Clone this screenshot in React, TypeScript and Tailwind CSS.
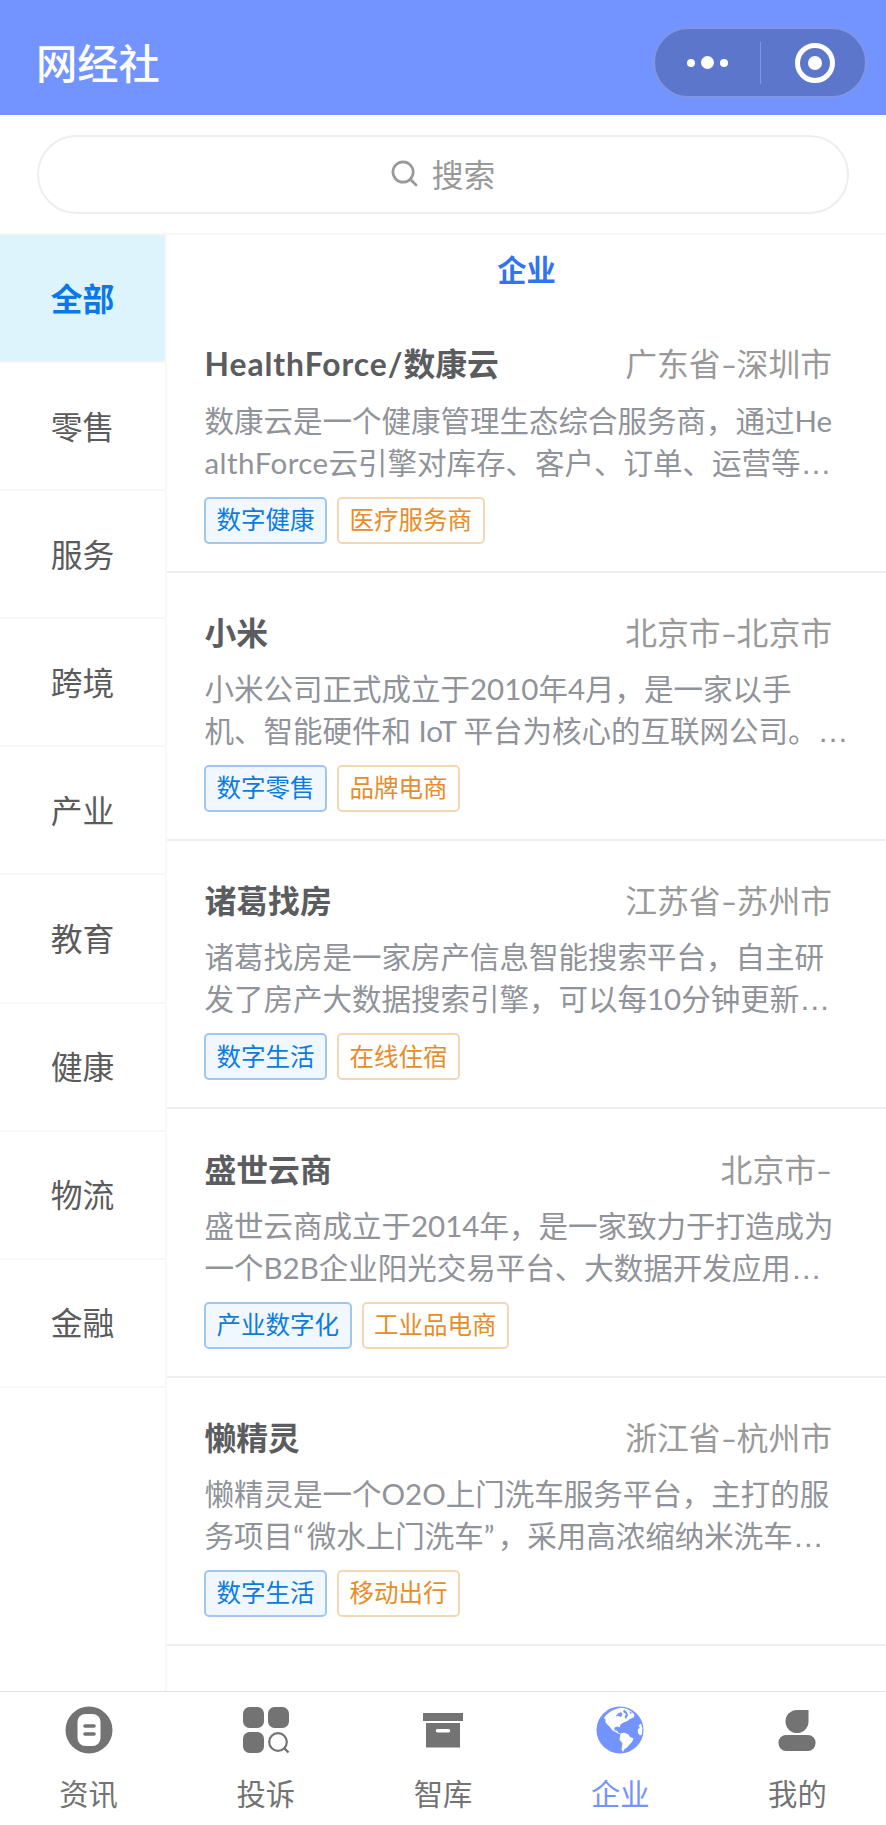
import React, { useState } from "react";

type Company = {
  name: string;
  place: string;
  lines: string[];
  tags: [string, string];
};

const categories = ["全部", "零售", "服务", "跨境", "产业", "教育", "健康", "物流", "金融"];

const companies: Company[] = [
  {
    name: "HealthForce/数康云",
    place: "广东省-深圳市",
    lines: ["数康云是一个健康管理生态综合服务商，通过He", "althForce云引擎对库存、客户、订单、运营等…"],
    tags: ["数字健康", "医疗服务商"],
  },
  {
    name: "小米",
    place: "北京市-北京市",
    lines: ["小米公司正式成立于2010年4月，是一家以手", "机、智能硬件和 IoT 平台为核心的互联网公司。…"],
    tags: ["数字零售", "品牌电商"],
  },
  {
    name: "诸葛找房",
    place: "江苏省-苏州市",
    lines: ["诸葛找房是一家房产信息智能搜索平台，自主研", "发了房产大数据搜索引擎，可以每10分钟更新…"],
    tags: ["数字生活", "在线住宿"],
  },
  {
    name: "盛世云商",
    place: "北京市-",
    lines: ["盛世云商成立于2014年，是一家致力于打造成为", "一个B2B企业阳光交易平台、大数据开发应用…"],
    tags: ["产业数字化", "工业品电商"],
  },
  {
    name: "懒精灵",
    place: "浙江省-杭州市",
    lines: ["懒精灵是一个O2O上门洗车服务平台，主打的服", "务项目“微水上门洗车”，采用高浓缩纳米洗车…"],
    tags: ["数字生活", "移动出行"],
  },
];

const NewsIcon = () => (
  <svg width="48" height="48" viewBox="0 0 48 48">
    <circle cx="24" cy="24" r="23.5" fill="currentColor" />
    <rect x="12.5" y="8" width="23" height="32" rx="8" fill="#fff" />
    <path d="M20 20h9M20 28h9" stroke="currentColor" strokeWidth="3.6" strokeLinecap="round" />
  </svg>
);

const ComplaintIcon = () => (
  <svg width="48" height="48" viewBox="0 0 48 48" fill="currentColor">
    <rect x="1" y="1" width="21" height="21" rx="6.5" />
    <rect x="26" y="1" width="21" height="21" rx="6.5" />
    <rect x="1" y="26" width="21" height="21" rx="6.5" />
    <circle cx="36" cy="36" r="8.8" fill="none" stroke="currentColor" strokeWidth="2.2" />
    <path d="M42 42l4.5 4.5" stroke="currentColor" strokeWidth="2.4" />
  </svg>
);

const LibraryIcon = () => (
  <svg width="48" height="48" viewBox="0 0 48 48" fill="currentColor">
    <path d="M4 7h40v8H4z" />
    <path fillRule="evenodd" d="M7 17h34v24.5H7zM18.5 23a1.5 1.5 0 0 0 0 3.5h11a1.5 1.5 0 0 0 0-3.5z" />
  </svg>
);

const GlobeIcon = () => (
  <svg width="48" height="48" viewBox="0 0 48 48">
    <circle cx="24" cy="24" r="23.5" fill="currentColor" />
    <g fill="#fff">
      <path d="M8 12C12 6 18 3 25 1.8C31 2 36 5 38.5 9L37.5 11.5L33 13.5L31.5 15L27.5 16.5L24.5 18.5L23.5 21.5L21.5 20.5L18.5 21.5L18.5 24.5L21 24.5L22 26.5L24.5 27.5L23 28L19.5 26L16 24L13.5 20.5L12.5 19.5L9.5 16.5L9.5 13.5z" />
      <path d="M24.5 27.5L28 26.5L32.5 28.5L34 31L37.5 32.5L36 36L33.5 38.5L31 41.5L28.5 43L27 46L25.5 43.5L26.5 37.5L23.5 33.5z" />
      <path d="M45 17.5L42.5 19.5L43.8 21.5L41.8 23.5L42 27L44 29.5L46 28.5L46.3 22z" />
    </g>
    <path fill="currentColor" d="M19.5 10.5L22 7.5L25 6L26.5 8L25 11L22.5 10zM28 3.5L31 6L32 9.5L30 13L28.5 11L30 8L27 6zM33 5L34.5 8L36 7z" />
  </svg>
);

const MineIcon = () => (
  <svg width="48" height="48" viewBox="0 0 48 48" fill="currentColor">
    <path d="M24 4h11.5v11.5a11.5 11.5 0 1 1-11.5-11.5z" />
    <rect x="5.5" y="29" width="37" height="16" rx="7.5" />
  </svg>
);

const tabs = [
  { label: "资讯", icon: <NewsIcon /> },
  { label: "投诉", icon: <ComplaintIcon /> },
  { label: "智库", icon: <LibraryIcon /> },
  { label: "企业", icon: <GlobeIcon /> },
  { label: "我的", icon: <MineIcon /> },
];

// Latin words and punctuation get their own spacing next to the Chinese text
const MixedText = ({ text, latin = "" }: { text: string; latin?: string }) => (
  <>
    {text.split(/([A-Za-z]{4,}\/?|[“”…-])/).map((part, i) => {
      if (part === "-") {
        return <span key={i} className="inline-block w-4 scale-x-[1.4] text-center">-</span>;
      }
      if (part === "…") {
        return <span key={i} className="font-['Liberation_Sans'] text-[31px] leading-none">…</span>;
      }
      if (part === "“" || part === "”") {
        return <span key={i} className="tracking-[3px]">{part}</span>;
      }
      if (/^[A-Za-z]{4,}/.test(part)) {
        return <span key={i} className={latin}>{part}</span>;
      }
      return part;
    })}
  </>
);

const CompanyCard = ({ company }: { company: Company }) => (
  <li className="h-[268.4px] border-b-2 border-[#eeeeee] pl-[37.5px] pr-[54px] pt-[37px]">
    <div className="flex h-12 items-center justify-between text-[31.8px]">
      <h2 className="font-bold text-[#5b5c5f]">
        <MixedText text={company.name} latin="tracking-[0.03em]" />
      </h2>
      <span className="text-[#999999]">
        <MixedText text={company.place} />
      </span>
    </div>
    <div className="mt-[10.5px] whitespace-pre text-[29.5px] leading-[42px] text-[#909399]">
      {company.lines.map((line) => (
        <p key={line} className="h-[42px]">
          <MixedText text={line} latin="tracking-[0.015em]" />
        </p>
      ))}
    </div>
    <div className="-ml-[0.5px] mt-[13px] flex gap-[10px] text-[24.5px]">
      <span className="flex h-[47px] items-center rounded-[5px] border-2 border-[#9fc7f0] bg-[#f0f7ff] px-[10.5px] text-[#0b7be0]">
        {company.tags[0]}
      </span>
      <span className="flex h-[47px] items-center rounded-[5px] border-2 border-[#f3d8b4] px-[10.5px] text-[#e88c28]">
        {company.tags[1]}
      </span>
    </div>
  </li>
);

const App = () => {
  const [category, setCategory] = useState("全部");
  const [tab, setTab] = useState("企业");

  return (
    <div className="flex h-[1825px] w-[886px] flex-col overflow-hidden bg-white font-[Lato,'Noto_Sans_CJK_SC',sans-serif]">
      <header className="flex h-[115px] shrink-0 items-center justify-between bg-[#7394ff] pl-9 pr-[19.5px] pt-[10px]">
        <h1 className="pt-[2px] text-[41.3px] font-medium text-white">网经社</h1>
        <div className="flex h-[71px] w-[214px] items-center rounded-full border-2 border-[#7f97e6] bg-[#5c76cc]">
          <button className="flex w-[105px] items-center justify-center gap-[6px]">
            <span className="size-2 rounded-full bg-white" />
            <span className="size-[13px] rounded-full bg-white" />
            <span className="size-2 rounded-full bg-white" />
          </button>
          <span className="h-[42px] w-px bg-[#7f97e6]" />
          <button className="flex w-[104px] items-center justify-center pl-[5px]">
            <span className="flex size-10 items-center justify-center rounded-full border-[5px] border-white">
              <span className="size-[14px] rounded-full bg-white" />
            </span>
          </button>
        </div>
      </header>

      <div className="h-[120px] shrink-0 border-b-2 border-[#f7f7f7] px-[37px] pt-5">
        <div className="flex h-[79px] items-center justify-center gap-[14px] rounded-full border-2 border-[#eeeeee] text-[31.8px] text-[#999999]">
          <svg className="-mt-0.5" width="27" height="27" viewBox="0 0 28 28" fill="none" stroke="currentColor" strokeWidth="2.8">
            <circle cx="12.5" cy="12.5" r="10.5" />
            <path d="M20 20l6 6" strokeLinecap="round" />
          </svg>
          <span className="pt-[2px]">搜索</span>
        </div>
      </div>

      <main className="flex min-h-0 flex-1">
        <ul className="w-[167px] shrink-0 border-r-2 border-[#f8f8f8]">
          {categories.map((item) => (
            <li
              key={item}
              onClick={() => setCategory(item)}
              className={
                "flex h-[128.1px] items-center justify-center border-b-2 border-[#f7f7f7] pt-[3px] text-[31.8px] " +
                (item === category ? "bg-[#def4fd] font-bold text-[#0b78e8]" : "text-[#5b5b5b]")
              }
            >
              {item}
            </li>
          ))}
        </ul>
        <section className="min-w-0 flex-1">
          <h3 className="flex h-[69.2px] items-center justify-center text-[29.3px] font-bold text-[#2f74f0]">企业</h3>
          <ul>
            {companies.map((company) => (
              <CompanyCard key={company.name} company={company} />
            ))}
          </ul>
        </section>
      </main>

      <nav className="flex h-[134px] shrink-0 border-t border-[#e0e0e0]">
        {tabs.map(({ label, icon }) => (
          <button
            key={label}
            onClick={() => setTab(label)}
            className={
              "flex flex-1 flex-col items-center pt-[14px] text-[29.3px] " +
              (label === tab ? "text-[#7394ff]" : "text-[#737373]")
            }
          >
            {icon}
            <span className="mt-[18px] leading-[44px]">{label}</span>
          </button>
        ))}
      </nav>
    </div>
  );
};

export default App;
